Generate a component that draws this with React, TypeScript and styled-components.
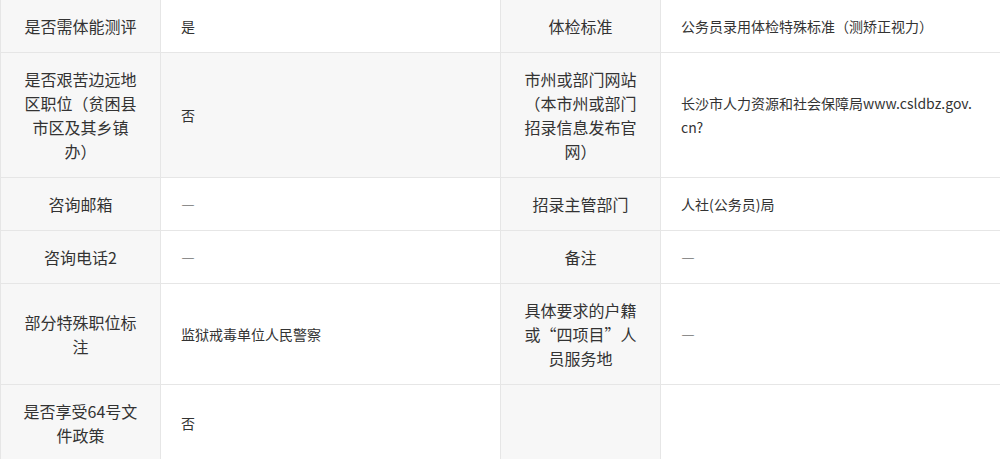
import type { ReactNode } from "react";
import styled, { createGlobalStyle } from "styled-components";

/*********************  ESTILOS  *********************/
const GlobalStyle = createGlobalStyle`
  html, body {
    margin: 0;
    padding: 0;
    background: #ffffff;
  }
  body {
    font-family: "Noto Sans CJK SC", "Noto Sans", sans-serif;
    color: #333333;
  }
`;

const Table = styled.table`
  width: 1000px;
  border-collapse: collapse;
  table-layout: fixed;
  margin-top: -1px;
`;

const Col = styled.col<{ $label?: boolean }>`
  width: ${(p) => (p.$label ? "160px" : "340px")};
`;

const Row = styled.tr``;

const Label = styled.td`
  background: #f7f7f7;
  border: 1px solid #e6e6e6;
  padding: 14px 20px;
  font-size: 16px;
  line-height: 24px;
  text-align: center;
  vertical-align: middle;
  color: #333333;
`;

const Value = styled.td<{ $shaded?: boolean }>`
  background: ${(p) => (p.$shaded ? "#f7f7f7" : "#ffffff")};
  border: 1px solid #e6e6e6;
  padding: 14px 20px;
  font-size: 14px;
  line-height: 24px;
  text-align: left;
  vertical-align: middle;
  color: #333333;
`;

const Dash = styled.span`
  font-feature-settings: "fwid";
`;

/*********************  DATOS  *********************/
type Cell = { label: string; value: ReactNode; shaded?: boolean };

const none = <Dash>—</Dash>;

const rows: [Cell, Cell][] = [
  [
    { label: "是否需体能测评", value: "是" },
    { label: "体检标准", value: "公务员录用体检特殊标准（测矫正视力）" },
  ],
  [
    {
      label: "是否艰苦边远地区职位（贫困县市区及其乡镇办）",
      value: "否",
      shaded: true,
    },
    {
      label: "市州或部门网站（本市州或部门招录信息发布官网）",
      value: (
        <>
          长沙市人力资源和社会保障局www.csldbz.gov.<wbr />cn?
        </>
      ),
    },
  ],
  [
    { label: "咨询邮箱", value: none },
    { label: "招录主管部门", value: "人社(公务员)局" },
  ],
  [
    { label: "咨询电话2", value: none },
    { label: "备注", value: none },
  ],
  [
    { label: "部分特殊职位标注", value: "监狱戒毒单位人民警察" },
    { label: "具体要求的户籍或“四项目”人员服务地", value: none },
  ],
  [
    { label: "是否享受64号文件政策", value: "否" },
    { label: "", value: "" },
  ],
];

/*********************  LÓGICA  *********************/
export default function App() {
  return (
    <>
      <GlobalStyle />
      <Table>
        <colgroup>
          <Col $label />
          <Col />
          <Col $label />
          <Col />
        </colgroup>
        <tbody>
          {rows.map((pair, i) => (
            <Row key={i}>
              {pair.map((cell, j) => [
                <Label key={`l${j}`}>{cell.label}</Label>,
                <Value key={`v${j}`} $shaded={cell.shaded}>
                  {cell.value}
                </Value>,
              ])}
            </Row>
          ))}
        </tbody>
      </Table>
    </>
  );
}
